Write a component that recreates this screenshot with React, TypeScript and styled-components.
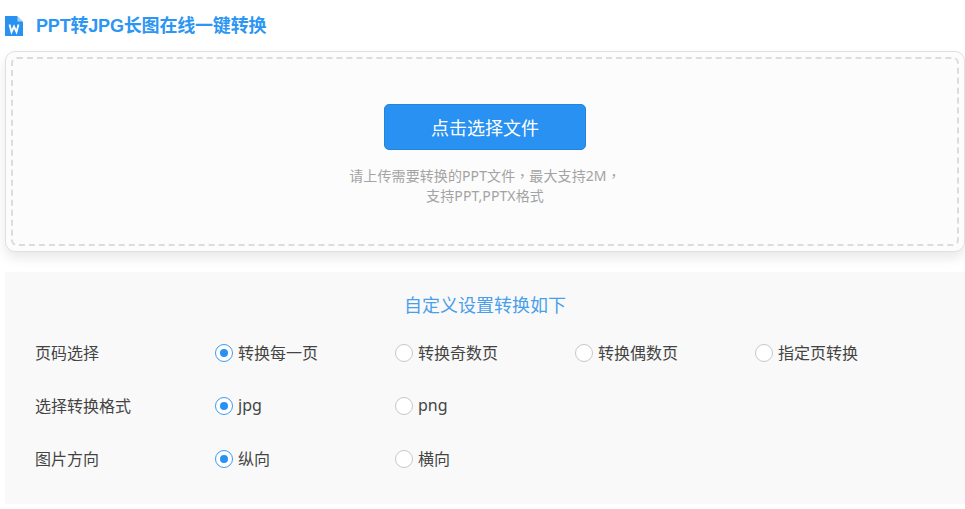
import React from "react";
import styled, { createGlobalStyle } from "styled-components";

const Global = createGlobalStyle`
  html, body { margin: 0; padding: 0; background: #fff; overflow: hidden; }
  body { font-family: "Noto Sans", "Noto Sans CJK SC", sans-serif; }
`;

const Page = styled.div`
  width: 960px;
  padding-left: 5px;
  display: flex;
  flex-direction: column;
`;

const Header = styled.h1`
  display: flex;
  align-items: center;
  gap: 13px;
  height: 51px;
  margin: 0;
  box-sizing: border-box;
  font-family: "Liberation Sans", "Noto Sans CJK SC", sans-serif;
  font-size: 18px;
  font-weight: 700;
  line-height: 24px;
  letter-spacing: -0.18px;
  color: #2c96f2;
`;

const FileIcon = styled.svg`
  width: 18px;
  height: 20px;
  flex: none;
  margin-top: 1px;
`;

const UploadCard = styled.section`
  box-sizing: border-box;
  height: 201px;
  padding: 5px;
  background: #fcfcfc;
  border: 1px solid #e0e0e0;
  border-radius: 10px;
  box-shadow: 0 6px 12px rgba(0, 0, 0, 0.09);
`;

const DropZone = styled.div`
  box-sizing: border-box;
  height: 100%;
  display: flex;
  flex-direction: column;
  align-items: center;
  padding-top: 45px;
  border: 2px dashed #dcdcdc;
  border-radius: 6px;
`;

const PickButton = styled.button`
  width: 202px;
  height: 46px;
  padding: 0;
  background: #2891f1;
  border: 1px solid #2484dc;
  border-radius: 5px;
  color: #fff;
  font: inherit;
  font-size: 18px;
`;

const Hint = styled.p`
  margin: 16px 0 0;
  font-family: "Noto Sans", "Noto Sans CJK TC", sans-serif;
  font-size: 14px;
  line-height: 20px;
  letter-spacing: 0.1px;
  color: #a3a3a3;
  text-align: center;
`;

const Settings = styled.section`
  box-sizing: border-box;
  height: 232px;
  margin-top: 20px;
  padding: 20px 30px 0;
  background: #f9f9f9;
`;

const SettingsTitle = styled.h2`
  margin: 0 0 7px;
  font-size: 18px;
  font-weight: 400;
  line-height: 26px;
  color: #4a9feb;
  text-align: center;
`;

const Row = styled.div`
  display: flex;
  align-items: center;
  height: 53px;
`;

const RowLabel = styled.div`
  width: 180px;
  font-size: 16px;
  color: #444;
`;

const Option = styled.label`
  width: 180px;
  display: flex;
  align-items: center;
  gap: 5px;
  font-size: 16px;
  color: #444;
`;

const Radio = styled.span<{ $on?: boolean }>`
  box-sizing: border-box;
  width: 18px;
  height: 18px;
  margin-top: 2px;
  flex: none;
  display: flex;
  align-items: center;
  justify-content: center;
  background: #fff;
  border: 1px solid ${(p) => (p.$on ? "#3d9bf2" : "#c8c8c8")};
  border-radius: 50%;
  &::after {
    content: "";
    display: ${(p) => (p.$on ? "block" : "none")};
    width: 8px;
    height: 8px;
    border-radius: 50%;
    background: #2891f1;
  }
`;

const rows = [
  { label: "页码选择", options: ["转换每一页", "转换奇数页", "转换偶数页", "指定页转换"] },
  { label: "选择转换格式", options: ["jpg", "png"] },
  { label: "图片方向", options: ["纵向", "横向"] },
];

export default function App() {
  return (
    <Page>
      <Global />
      <Header>
        <FileIcon viewBox="0 0 18 20" aria-hidden="true">
          <path d="M0 0H12L18 6V20H0Z" fill="#2891f1" />
          <path d="M12.5 0L18 5.5H12.5Z" fill="#a9d3f8" />
          <path
            d="M4.5 8.5L6.5 16L9 10.5L11.5 16L13.5 8.5"
            fill="none"
            stroke="#fff"
            strokeWidth="1.9"
          />
        </FileIcon>
        PPT转JPG长图在线一键转换
      </Header>
      <UploadCard>
        <DropZone>
          <PickButton type="button">点击选择文件</PickButton>
          <Hint>
            请上传需要转换的PPT文件，最大支持2M，
            <br />
            支持PPT,PPTX格式
          </Hint>
        </DropZone>
      </UploadCard>
      <Settings>
        <SettingsTitle>自定义设置转换如下</SettingsTitle>
        {rows.map((row) => (
          <Row key={row.label}>
            <RowLabel>{row.label}</RowLabel>
            {row.options.map((opt, i) => (
              <Option key={opt}>
                <Radio $on={i === 0} />
                {opt}
              </Option>
            ))}
          </Row>
        ))}
      </Settings>
    </Page>
  );
}
